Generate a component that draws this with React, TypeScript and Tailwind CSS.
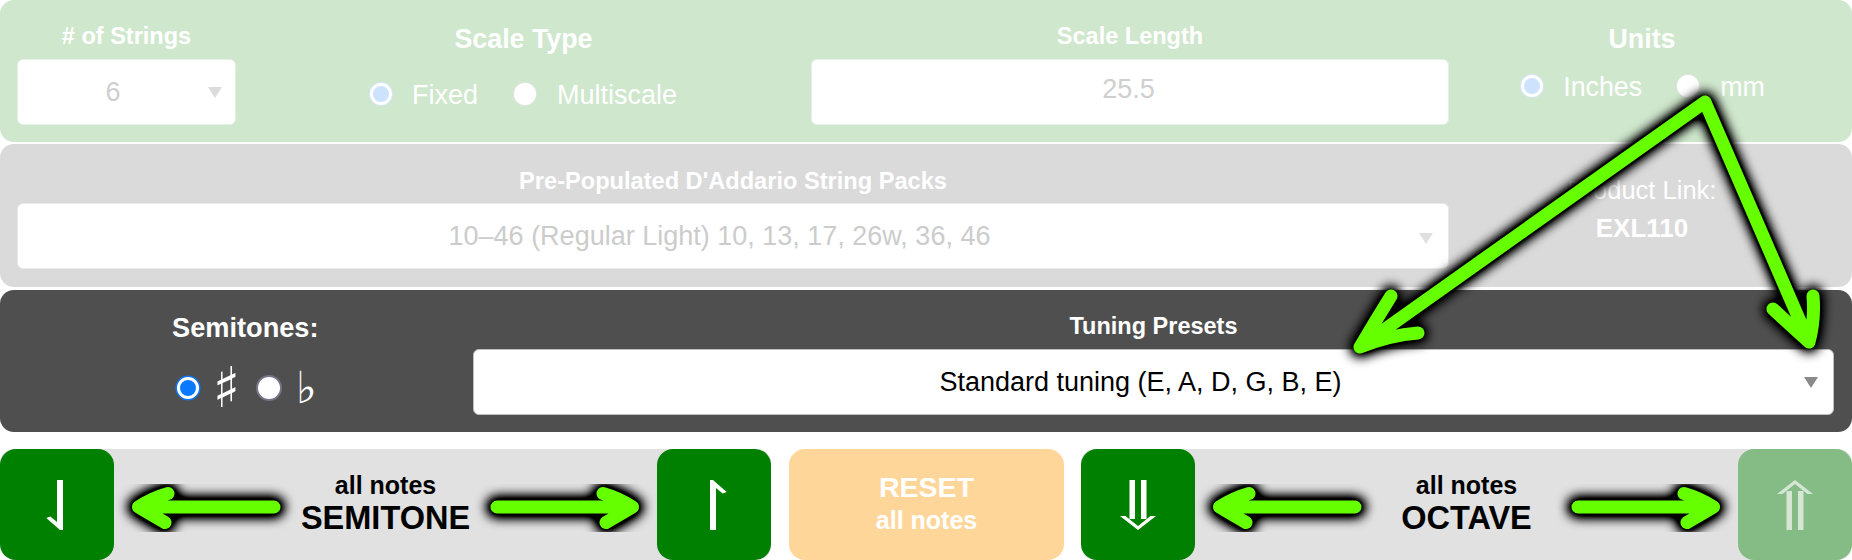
import React from 'react';

const sans = "font-['Liberation_Sans',Arial,sans-serif]";

const Radio = ({ checked, dark }: { checked?: boolean; dark?: boolean }) => {
  if (dark) {
    return (
      <span
        className={`block w-[22px] h-[22px] rounded-full ${
          checked ? 'bg-[#0a78ff] border-[3px] border-white shadow-[0_0_0_1.5px_#0a78ff]' : 'bg-white shadow-[0_0_0_2px_#77748a]'
        }`}
      />
    );
  }
  return (
    <span
      className={`block w-[22px] h-[22px] rounded-full ${
        checked ? 'bg-[#cde2fd] border-[3px] border-white shadow-[0_0_0_1px_#d5e5fb]' : 'bg-white shadow-[0_0_0_1px_#dfe5df]'
      }`}
    />
  );
};

const Caret = ({ color }: { color: string }) => (
  <svg width="14" height="11" viewBox="0 0 14 11" className="block">
    <path d="M0 0H14L7 11Z" fill={color} />
  </svg>
);

// hand drawn green arrow used beside the note buttons
const SideArrow = ({ dir }: { dir: 'left' | 'right' }) => (
  <svg width="180" height="80" viewBox="0 0 180 80" className={`block shrink-0 overflow-visible ${dir === 'right' ? '-scale-x-100' : ''}`}>
    <g fill="none" strokeLinecap="round" strokeLinejoin="round">
      <path d="M18.500 40H154M18.500 40Q32 31 48 26.500M18.500 40Q30 47 45 55.500" stroke="#000" strokeWidth="21" filter="url(#arrow-glow)" />
      <path d="M18.500 40H154M18.500 40Q32 31 48 26.500M18.500 40Q30 47 45 55.500" stroke="#66ff00" strokeWidth="13" />
    </g>
  </svg>
);

const HarpoonDown = () => (
  <svg width="22" height="52" viewBox="0 0 22 52" className="block">
    <path d="M11 1H17V51H14L0.300 39L4.300 37.500L11 43Z" fill="#fff" />
  </svg>
);

const HarpoonUp = () => (
  <svg width="22" height="52" viewBox="0 0 22 52" className="block ml-[3px]">
    <path d="M5 51V1H8L21.700 13L17.700 14.500L11 9V51Z" fill="#fff" />
  </svg>
);

const DoubleArrow = ({ up }: { up?: boolean }) => (
  <svg width="36" height="52" viewBox="0 0 36 52" className={`block ${up ? '-scale-y-100' : ''}`}>
    <path d="M12.250 1V40M23.750 1V40" stroke="currentColor" strokeWidth="5.500" fill="none" />
    <path d="M0 37H5.500L18 47L30.500 37H36L18 51Z" fill="currentColor" />
  </svg>
);

export default function App() {
  return (
    <div className={`${sans} relative w-[1852px] h-[560px] bg-white overflow-hidden flex flex-col`}>
      {/* SCALE SETTINGS */}
      <div className="h-[142px] shrink-0 bg-[#cfe7cd] rounded-[14px] flex pl-[17px] text-white">
        <div className="w-[219px] pt-[23px] flex flex-col">
          <div className="h-[26px] leading-[26px] text-[23.500px] font-bold text-center">
            # of Strings
          </div>
          <div className="mt-[10px] h-[66px] bg-white rounded-[6px] flex items-center border border-[#e6efe6]">
            <span className="w-[190px] text-center text-[27px] text-[#cfcfcf]">6</span>
            <Caret color="#dcdcdc" />
          </div>
        </div>
        <div className="w-[575px] pt-[24px] flex flex-col items-center">
          <div className="h-[30px] leading-[30px] text-[26.800px] font-bold">Scale Type</div>
          <div className="mt-[26px] h-[30px] flex items-center text-[27px]">
            <span className="-mt-[2px]">
              <Radio checked />
            </span>
            <span className="ml-[20px]">Fixed</span>
            <span className="ml-[36px] -mt-[2px]">
              <Radio />
            </span>
            <span className="ml-[21px]">Multiscale</span>
          </div>
        </div>
        <div className="w-[638px] pt-[23px] flex flex-col">
          <div className="h-[26px] leading-[26px] text-[23.500px] font-bold text-center">Scale Length</div>
          <div className="mt-[10px] h-[66px] bg-white rounded-[6px] border border-[#e6efe6] flex items-center justify-center text-[27px] text-[#cfcfcf] pb-[5px] pr-[3px]">
            25.5
          </div>
        </div>
        <div className="w-[386px] pt-[24px] flex flex-col items-center">
          <div className="h-[30px] leading-[30px] text-[26.800px] font-bold">Units</div>
          <div className="mt-[18px] h-[30px] flex items-center text-[26.800px] pl-[2px]">
            <span className="-mt-[2px]">
              <Radio checked />
            </span>
            <span className="ml-[20px]">Inches</span>
            <span className="ml-[35px] -mt-[2px]">
              <Radio />
            </span>
            <span className="ml-[21px]">mm</span>
          </div>
        </div>
      </div>

      {/* STRING PACKS */}
      <div className="mt-[2px] h-[143px] shrink-0 bg-[#dadada] rounded-[14px] flex pl-[17px] text-white">
        <div className="w-[1432px] pt-[24px] flex flex-col">
          <div className="h-[26px] leading-[26px] text-[23.600px] font-bold text-center">
            Pre-Populated D'Addario String Packs
          </div>
          <div className="mt-[9px] h-[66px] bg-white rounded-[6px] border border-[#e8e8e8] relative flex items-center justify-center text-[27px] text-[#cccccc] pr-[27px]">
            10–46 (Regular Light) 10, 13, 17, 26w, 36, 46
            <span className="absolute right-[15px] top-[29px]">
              <Caret color="#e0e0e0" />
            </span>
          </div>
        </div>
        <div className="w-[386px] pt-[32px] flex flex-col items-center">
          <div className="h-[28px] leading-[28px] text-[25.500px]">Product Link:</div>
          <div className="mt-[10px] h-[28px] leading-[28px] text-[26px] font-bold">EXL110</div>
        </div>
      </div>

      {/* TUNING */}
      <div className="mt-[3px] h-[142px] shrink-0 bg-[#4f4f4f] rounded-[14px] flex text-white">
        <div className="w-[473px] pt-[22px] pl-[172px] flex flex-col">
          <div className="h-[32px] leading-[32px] text-[27.200px] font-bold">Semitones:</div>
          <div className="mt-[19px] h-[50px] flex items-center pl-[5px]">
            <Radio checked dark />
            <span className="w-[59px] pl-[14px] text-[56px] leading-[50px] font-['DejaVu_Sans',sans-serif]">♯</span>
            <Radio dark />
            <span className="ml-[16px] text-[44px] leading-[50px] font-['DejaVu_Sans',sans-serif]">♭</span>
          </div>
        </div>
        <div className="w-[1361px] pt-[23px] flex flex-col">
          <div className="h-[26px] leading-[26px] text-[23.500px] font-bold text-center">Tuning Presets</div>
          <div className="mt-[10px] h-[66px] bg-white rounded-[6px] border border-[#bdbdbd] relative flex items-center justify-center text-[27px] text-black pr-[26px]">
            Standard tuning (E, A, D, G, B, E)
            <span className="absolute right-[15px] top-[27px]">
              <Caret color="#8a8a8a" />
            </span>
          </div>
        </div>
      </div>

      {/* TRANSPOSE BUTTONS */}
      <div className="mt-[17px] flex-1 bg-white flex">
        <div className="w-[771px] bg-[#e1e1e1] flex items-center rounded-[14px]">
          <div className="w-[114px] h-full bg-[#008000] rounded-[16px] flex items-center justify-center">
            <HarpoonDown />
          </div>
          <div className="w-[543px] relative flex items-center justify-center h-full">
            <div className="absolute left-[6px] top-[18px]"><SideArrow dir="left" /></div>
            <div className="text-center font-bold text-black pb-[4px]">
              <div className="text-[25px] leading-[30px]">all notes</div>
              <div className="text-[32.500px] leading-[36px]">SEMITONE</div>
            </div>
            <div className="absolute right-[6px] top-[18px]"><SideArrow dir="right" /></div>
          </div>
          <div className="w-[114px] h-full bg-[#008000] rounded-[16px] flex items-center justify-center">
            <HarpoonUp />
          </div>
        </div>
        <div className="ml-[18px] w-[275px] bg-[#ffd699] rounded-[16px] flex flex-col items-center justify-center text-white font-bold pb-[5px]">
          <div className="text-[28.500px] leading-[36px]">RESET</div>
          <div className="text-[25px] leading-[30px]">all notes</div>
        </div>
        <div className="ml-[17px] flex-1 bg-[#e1e1e1] flex items-center rounded-[14px]">
          <div className="w-[114px] h-full bg-[#008000] rounded-[16px] flex items-center justify-center text-white">
            <DoubleArrow />
          </div>
          <div className="w-[543px] relative flex items-center justify-center h-full">
            <div className="absolute left-[6px] top-[18px]"><SideArrow dir="left" /></div>
            <div className="text-center font-bold text-black pb-[4px]">
              <div className="text-[25px] leading-[30px]">all notes</div>
              <div className="text-[32.500px] leading-[36px]">OCTAVE</div>
            </div>
            <div className="absolute right-[6px] top-[18px]"><SideArrow dir="right" /></div>
          </div>
          <div className="w-[114px] h-full bg-[#85bc85] rounded-[16px] flex items-center justify-center text-[#d5e6d5]">
            <DoubleArrow up />
          </div>
        </div>
      </div>

      {/* ANNOTATION ARROWS OVERLAY */}
      <svg className="absolute inset-0 pointer-events-none" width="1852" height="560" viewBox="0 0 1852 560">
        <defs>
          <filter id="arrow-glow" x="-30%" y="-30%" width="160%" height="160%">
            <feGaussianBlur stdDeviation="6" />
            <feComponentTransfer>
              <feFuncA type="linear" slope="1.6" />
            </feComponentTransfer>
          </filter>
        </defs>
        <g fill="none" strokeLinecap="round" strokeLinejoin="round">
          <path
            d="M1360 347L1705 102L1809 342M1360 347Q1376 320 1391 296M1360 347Q1390 335 1418 333M1809 342Q1790 325 1773 309M1809 342Q1815 320 1813 296"
            stroke="#000"
            strokeWidth="19"
            filter="url(#arrow-glow)"
          />
          <path
            d="M1360 347L1705 102L1809 342M1360 347Q1376 320 1391 296M1360 347Q1390 335 1418 333M1809 342Q1790 325 1773 309M1809 342Q1815 320 1813 296"
            stroke="#66ff00"
            strokeWidth="13"
          />
        </g>
      </svg>
    </div>
  );
}
